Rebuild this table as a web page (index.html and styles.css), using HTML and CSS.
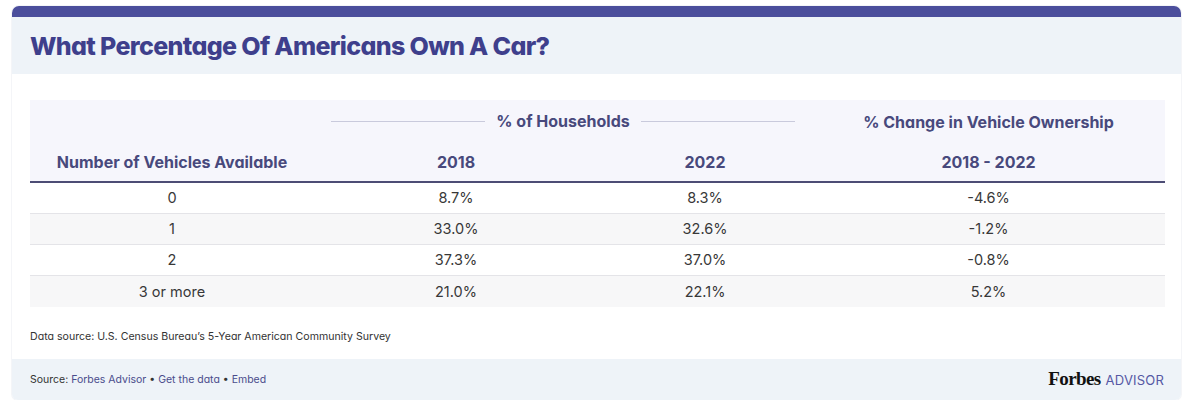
FILE: index.html
```html
<!DOCTYPE html>
<html lang="en">
<head>
<meta charset="utf-8">
<title>What Percentage Of Americans Own A Car?</title>
<link rel="stylesheet" href="styles.css">
</head>
<body>
<div class="card">
  <div class="card-head">
    <h1 class="title">What Percentage Of Americans Own A Car?</h1>
  </div>
  <div class="card-body">
    <table class="data">
      <colgroup>
        <col class="c1"><col class="c2"><col class="c3"><col class="c4">
      </colgroup>
      <thead>
        <tr class="group-row">
          <th></th>
          <th colspan="2" class="group">
            <div class="group-inner"><span class="rule"></span><span>% of Households</span><span class="rule"></span></div>
          </th>
          <th>% Change in Vehicle Ownership</th>
        </tr>
        <tr class="sub-row">
          <th>Number of Vehicles Available</th>
          <th>2018</th>
          <th>2022</th>
          <th>2018 - 2022</th>
        </tr>
      </thead>
      <tbody>
        <tr><td>0</td><td>8.7%</td><td>8.3%</td><td>-4.6%</td></tr>
        <tr class="alt"><td>1</td><td>33.0%</td><td>32.6%</td><td>-1.2%</td></tr>
        <tr><td>2</td><td>37.3%</td><td>37.0%</td><td>-0.8%</td></tr>
        <tr class="alt"><td>3 or more</td><td>21.0%</td><td>22.1%</td><td>5.2%</td></tr>
      </tbody>
    </table>
    <p class="note">Data source: U.S. Census Bureau’s 5-Year American Community Survey</p>
  </div>
  <div class="card-foot">
    <div class="source">Source: <a href="#">Forbes Advisor</a> • <a href="#">Get the data</a> • <a href="#">Embed</a></div>
    <div class="brand"><span class="forbes">Forbes</span><span class="advisor">ADVISOR</span></div>
  </div>
</div>
</body>
</html>
```

FILE: styles.css
```css
* { box-sizing: border-box; }
html, body { margin: 0; padding: 0; background: #ffffff; }
body {
  font-family: Inter, "Noto Sans", sans-serif;
  font-feature-settings: "cv11";
  color: #333333;
}
.card {
  margin: 6px 12px 0 12px;
  width: 1169px;
  border-top: 11px solid #4b4e9c;
  border-radius: 7px 7px 6px 6px;
  box-shadow: 0 0 0 1px #f4f5f8;
}
.card-head {
  background: #eef3f8;
  height: 57px;
  padding: 0 18px;
  display: flex;
  align-items: center;
}
.title {
  margin: 0;
  font-size: 25px;
  font-weight: 800;
  letter-spacing: -0.65px;
  color: #3e3f8c;
}
.card-body {
  padding: 26px 16px 0 18px;
}
.data {
  width: 1135px;
  border-collapse: collapse;
  table-layout: fixed;
}
.c1 { width: 284px; }
.c2 { width: 284px; }
.c3 { width: 214px; }
.c4 { width: 353px; }
.data thead { background: #f6f6fc; }
.data th {
  font-size: 16px;
  font-weight: 700;
  color: #48497c;
  text-align: center;
  padding: 0;
}
.group-row th { height: 42px; padding-top: 1px; }
.sub-row th { height: 40px; border-bottom: 2px solid #4d4d75; }
.group { padding: 0 17px !important; }
.group-inner {
  display: flex;
  align-items: center;
  gap: 11px;
}
.rule { flex: 1; height: 1px; background: #c9cadc; }
.data td {
  height: 31.3px;
  text-align: center;
  font-size: 14.5px;
  color: #383838;
  padding: 0;
  border-top: 1px solid #e4e4e8;
}
.data tbody tr:first-child td { border-top: none; height: 31px; }
.data tr.alt td { background: #f7f7f8; }
.note {
  margin: 23px 0 0 0;
  font-size: 10.6px;
  color: #333333;
  height: 29px;
}
.card-foot {
  background: #eef3f8;
  height: 41px;
  padding: 0 17px 0 18px;
  display: flex;
  align-items: center;
  justify-content: space-between;
  border-radius: 0 0 6px 6px;
}
.source { font-size: 10.5px; color: #333333; }
.source a { color: #4a4c8c; text-decoration: none; }
.brand { display: flex; align-items: baseline; gap: 5px; }
.forbes {
  font-family: "Liberation Serif", "DejaVu Serif", serif;
  font-weight: 700;
  font-size: 19px;
  color: #111111;
  letter-spacing: -0.6px;
}
.advisor {
  font-size: 13px;
  color: #5558a4;
  letter-spacing: 0.2px;
}
```
